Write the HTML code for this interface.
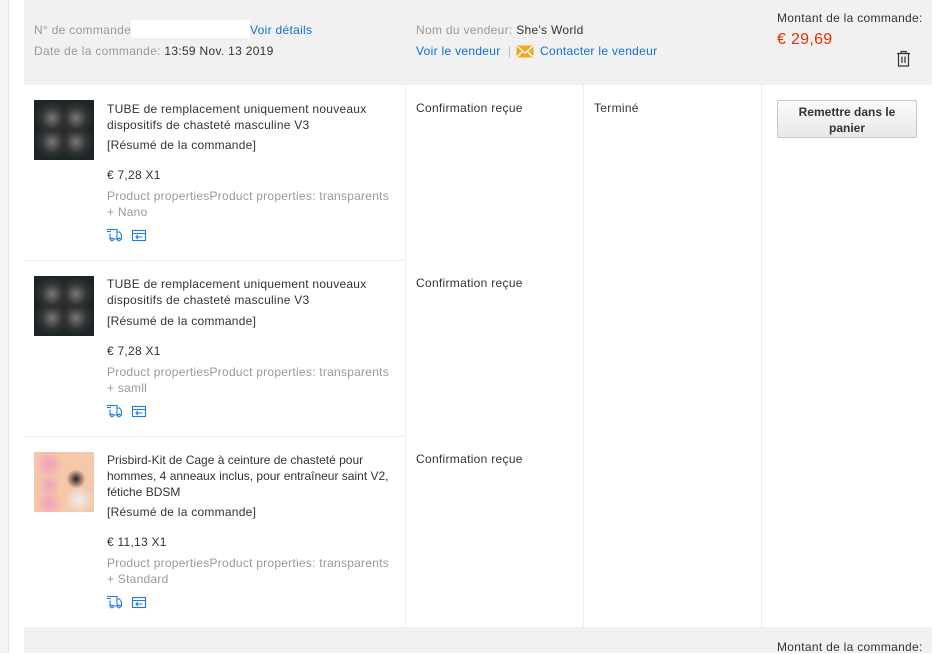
<!DOCTYPE html>
<html><head><meta charset="utf-8"><style>
*{margin:0;padding:0;box-sizing:border-box}
body{width:937px;height:653px;overflow:hidden;background:#fff;font-family:"Liberation Sans",sans-serif;font-size:12px;color:#333;position:relative;letter-spacing:0.3px}
.a{position:absolute;white-space:nowrap}
.g{color:#999}.b{color:#0f6fd6}
.strip{position:absolute;left:0;top:0;width:9px;height:653px;background:#f4f4f4;border-right:1px solid #e6e6e6}
.hd{position:absolute;left:24px;top:0;width:908px;height:85px;background:#f1f1f1}
.vl{position:absolute;width:1px;background:#efefef}
.hl{position:absolute;height:1px;background:#efefef}
.img{position:absolute;left:34px;width:60px;height:60px}
.t{position:absolute;left:107px;width:300px;line-height:16px;font-size:12px;color:#333;letter-spacing:0.25px}
.p{position:absolute;left:107px;width:300px;line-height:16px;color:#999;letter-spacing:0.25px}
.btn{position:absolute;left:777px;top:100px;width:140px;height:38px;border:1px solid #c8c8c8;background:linear-gradient(#fafafa,#e8e8e8);font-weight:bold;text-align:center;line-height:16px;padding-top:3px;color:#333;border-radius:2px;letter-spacing:0}
</style></head><body>
<div class="strip"></div>
<div class="hd"></div>
<div class="a g" style="left:34px;top:23px">N° de commande</div>
<div class="a" style="left:131px;top:20px;width:119px;height:18px;background:#fff"></div>
<div class="a b" style="left:250px;top:23px">Voir détails</div>
<div class="a g" style="left:34px;top:44px">Date de la commande: <span style="color:#333">13:59 Nov. 13 2019</span></div>
<div class="a g" style="left:416px;top:23px">Nom du vendeur: <span style="color:#333">She's World</span></div>
<div class="a b" style="left:416px;top:44px">Voir le vendeur <span style="color:#bbb">&nbsp;|&nbsp;</span></div>
<svg class="a" style="left:516px;top:45px" width="18" height="13"><rect x="0.5" y="0.5" width="17" height="12" fill="#f5a623"/><path d="M1 1L9 8L17 1M1 12L7 6M17 12L11 6" stroke="#fff" stroke-width="1.3" fill="none"/></svg>
<div class="a b" style="left:540px;top:44px">Contacter le vendeur</div>
<div class="a" style="left:777px;top:11px">Montant de la commande:</div>
<div class="a" style="left:777px;top:31px;font-size:16px;color:#e62e04">€ 29,69</div>
<svg class="a" style="left:896px;top:50px" width="15" height="17"><path d="M1 3.5H14M5 3.5V1.5H10V3.5M2.5 3.5V16H12.5V3.5M6 6.5V13M9 6.5V13" stroke="#333" stroke-width="1.2" fill="none"/></svg>

<div class="vl" style="left:405px;top:85px;height:542px"></div>
<div class="vl" style="left:583px;top:85px;height:542px"></div>
<div class="vl" style="left:761px;top:85px;height:542px"></div>
<div class="hl" style="left:24px;top:260px;width:381px"></div>
<div class="hl" style="left:24px;top:436px;width:381px"></div>

<div class="img" style="top:100px;background:radial-gradient(circle at 30% 30%,#777 0,#333 18%,transparent 30%),radial-gradient(circle at 70% 30%,#777 0,#333 18%,transparent 30%),radial-gradient(circle at 30% 70%,#777 0,#333 18%,transparent 30%),radial-gradient(circle at 70% 70%,#777 0,#333 18%,transparent 30%),#1c2428"></div>
<div class="t" style="top:101px">TUBE de remplacement uniquement nouveaux<br>dispositifs de chasteté masculine V3</div>
<div class="t" style="top:137px">[Résumé de la commande]</div>
<div class="t" style="top:167px">€ 7,28 X1</div>
<div class="p" style="top:188px">Product propertiesProduct properties: transparents<br>+ Nano</div>

<div class="img" style="top:276px;background:radial-gradient(circle at 30% 30%,#777 0,#333 18%,transparent 30%),radial-gradient(circle at 70% 30%,#777 0,#333 18%,transparent 30%),radial-gradient(circle at 30% 70%,#777 0,#333 18%,transparent 30%),radial-gradient(circle at 70% 70%,#777 0,#333 18%,transparent 30%),#1c2428"></div>
<div class="t" style="top:276px">TUBE de remplacement uniquement nouveaux<br>dispositifs de chasteté masculine V3</div>
<div class="t" style="top:313px">[Résumé de la commande]</div>
<div class="t" style="top:343px">€ 7,28 X1</div>
<div class="p" style="top:364px">Product propertiesProduct properties: transparents<br>+ samll</div>

<div class="img" style="top:452px;background:radial-gradient(circle at 25% 20%,#f2a0c0 0,transparent 22%),radial-gradient(circle at 25% 55%,#f2a0c0 0,transparent 20%),radial-gradient(circle at 25% 85%,#f2a0c0 0,transparent 20%),radial-gradient(circle at 70% 45%,#222 0,transparent 18%),radial-gradient(circle at 75% 80%,#eee 0,transparent 22%),#f4c8a8"></div>
<div class="t" style="top:452px;width:300px;letter-spacing:0">Prisbird-Kit de Cage à ceinture de chasteté pour<br>hommes, 4 anneaux inclus, pour entraîneur saint V2,<br>fétiche BDSM</div>
<div class="t" style="top:504px">[Résumé de la commande]</div>
<div class="t" style="top:534px">€ 11,13 X1</div>
<div class="p" style="top:555px">Product propertiesProduct properties: transparents<br>+ Standard</div>

<svg class="a" style="left:107px;top:228px" width="40" height="14"><g stroke="#1a7be0" stroke-width="1.1" fill="none"><path d="M0 1.5H5M0 3.5H4M3 1.5H10V11H3V5.5M10 4H12.5L14.5 7V11H13"/><circle cx="5" cy="11.5" r="1.3" fill="#fff"/><circle cx="12" cy="11.5" r="1.3" fill="#fff"/><rect x="25.5" y="2.5" width="13" height="10"/><path d="M25.5 5.5H38.5M35.5 9H29M31 7L29 9L31 11"/></g></svg>
<svg class="a" style="left:107px;top:404px" width="40" height="14"><g stroke="#1a7be0" stroke-width="1.1" fill="none"><path d="M0 1.5H5M0 3.5H4M3 1.5H10V11H3V5.5M10 4H12.5L14.5 7V11H13"/><circle cx="5" cy="11.5" r="1.3" fill="#fff"/><circle cx="12" cy="11.5" r="1.3" fill="#fff"/><rect x="25.5" y="2.5" width="13" height="10"/><path d="M25.5 5.5H38.5M35.5 9H29M31 7L29 9L31 11"/></g></svg>
<svg class="a" style="left:107px;top:595px" width="40" height="14"><g stroke="#1a7be0" stroke-width="1.1" fill="none"><path d="M0 1.5H5M0 3.5H4M3 1.5H10V11H3V5.5M10 4H12.5L14.5 7V11H13"/><circle cx="5" cy="11.5" r="1.3" fill="#fff"/><circle cx="12" cy="11.5" r="1.3" fill="#fff"/><rect x="25.5" y="2.5" width="13" height="10"/><path d="M25.5 5.5H38.5M35.5 9H29M31 7L29 9L31 11"/></g></svg>

<div class="a" style="left:416px;top:101px">Confirmation reçue</div>
<div class="a" style="left:416px;top:276px">Confirmation reçue</div>
<div class="a" style="left:416px;top:452px">Confirmation reçue</div>
<div class="a" style="left:594px;top:101px">Terminé</div>
<div class="btn">Remettre dans le<br>panier</div>

<div class="a" style="left:24px;top:627px;width:908px;height:26px;background:#f1f1f1"></div>
<div class="a" style="left:777px;top:640px">Montant de la commande:</div>
</body></html>
